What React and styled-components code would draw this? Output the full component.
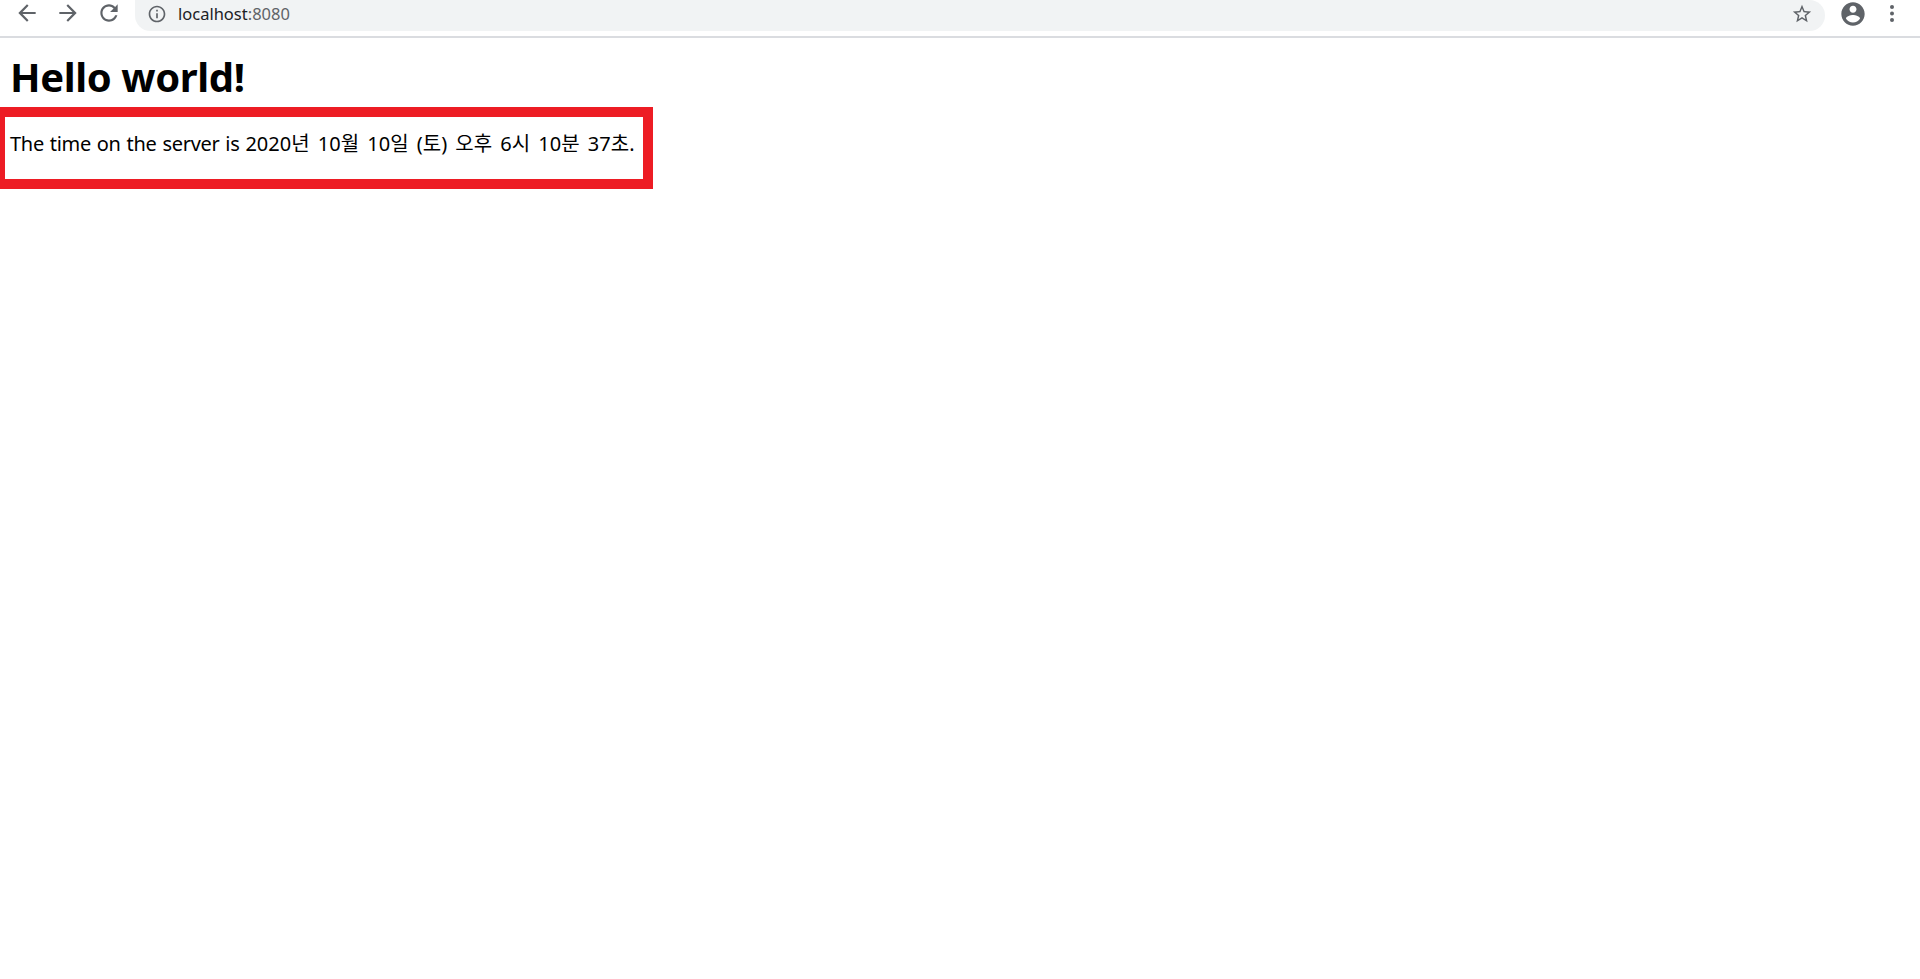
import React from "react";
import styled, { createGlobalStyle } from "styled-components";

const Global = createGlobalStyle`
  html, body { margin: 0; padding: 0; background: #fff; }
  body { font-family: "Noto Sans", "Noto Sans CJK KR", sans-serif; color: #000; }
`;
const Page = styled.div`
  min-height: 979px;
  display: flex;
  flex-direction: column;
  overflow: hidden;
`;
const Toolbar = styled.header`
  height: 36px;
  border-bottom: 2px solid #dadce0;
  display: flex;
  align-items: flex-start;
  color: #5f6368;
`;
const NavGroup = styled.nav`
  display: flex;
  gap: 15px;
  padding-left: 14px;
  width: 135px;
  box-sizing: border-box;
`;
const Icon = styled.svg`
  display: block;
  flex: none;
  fill: currentColor;
`;
const AddressBar = styled.div`
  width: 1690px;
  height: 31px;
  box-sizing: border-box;
  background: #f1f3f4;
  border-radius: 0 16px 16px 16px;
  display: flex;
  align-items: center;
  padding: 0 12px 3px;
  gap: 11px;
`;
const Url = styled.div`
  flex: 1;
  font-family: "Noto Sans", sans-serif;
  font-size: 16.5px;
  color: #5f6368;
  margin-top: -1px;
  b { font-weight: 400; color: #202124; }
`;
const Side = styled.div`
  display: flex;
  align-items: center;
  height: 27px;
  padding-left: 14px;
  gap: 23px;
`;
const Heading = styled.h1`
  margin: 0;
  padding: 16px 0 0 10px;
  height: 53px;
  font-size: 40px;
  line-height: 46px;
  font-weight: 700;
  letter-spacing: -0.4px;
`;
const TimeBox = styled.section`
  width: 653px;
  height: 82px;
  box-sizing: border-box;
  border: solid #ed1c24;
  border-width: 10px 10px 10px 5px;
  padding: 14px 0 0 5px;
`;
const TimeText = styled.p`
  margin: 0;
  font-size: 20px;
  line-height: 26px;
  white-space: nowrap;
`;
const Label = styled.span`
  letter-spacing: -0.3px;
  word-spacing: 1px;
`;
const Stamp = styled.span`
  word-spacing: 3px;
`;

const M = ({ size, d }) => (
  <Icon width={size} height={size} viewBox="0 0 24 24"><path d={d} /></Icon>
);

export default function App() {
  return (
    <Page>
      <Global />
      <Toolbar>
        <NavGroup>
          <M size={26} d="M20 11H7.83l5.59-5.59L12 4l-8 8 8 8 1.41-1.41L7.83 13H20v-2z" />
          <M size={26} d="M4 11h12.17l-5.59-5.59L12 4l8 8-8 8-1.41-1.41L16.17 13H4v-2z" />
          <M size={26} d="M17.65 6.35C16.2 4.9 14.21 4 12 4c-4.42 0-7.99 3.58-7.99 8s3.57 8 7.99 8c3.73 0 6.84-2.55 7.73-6h-2.08c-.82 2.33-3.04 4-5.65 4-3.31 0-6-2.69-6-6s2.69-6 6-6c1.66 0 3.14.69 4.22 1.78L13 11h7V4l-2.35 2.35z" />
        </NavGroup>
        <AddressBar>
          <M size={20} d="M11 7h2v2h-2zm0 4h2v6h-2zm1-9C6.48 2 2 6.48 2 12s4.48 10 10 10 10-4.48 10-10S17.52 2 12 2zm0 18c-4.41 0-8-3.59-8-8s3.59-8 8-8 8 3.59 8 8-3.59 8-8 8z" />
          <Url><b>localhost</b>:8080</Url>
          <M size={22} d="M22 9.24l-7.19-.62L12 2 9.19 8.63 2 9.24l5.46 4.73L5.82 21 12 17.27 18.18 21l-1.63-7.03L22 9.24zM12 15.4l-3.76 2.27 1-4.28-3.32-2.88 4.38-.38L12 6.1l1.71 4.04 4.38.38-3.32 2.88 1 4.28L12 15.4z" />
        </AddressBar>
        <Side>
          <M size={28} d="M12 2C6.48 2 2 6.48 2 12s4.48 10 10 10 10-4.48 10-10S17.52 2 12 2zm0 3c1.66 0 3 1.34 3 3s-1.34 3-3 3-3-1.34-3-3 1.34-3 3-3zm0 14.2c-2.5 0-4.71-1.28-6-3.22.03-1.99 4-3.08 6-3.08 1.99 0 5.97 1.09 6 3.08-1.29 1.94-3.5 3.22-6 3.22z" />
          <Icon width="4" height="17" viewBox="0 0 4 17">
            <circle cx="2" cy="2" r="2" />
            <circle cx="2" cy="8.5" r="2" />
            <circle cx="2" cy="15" r="2" />
          </Icon>
        </Side>
      </Toolbar>
      <main>
        <Heading>Hello world!</Heading>
        <TimeBox>
          <TimeText><Label>The time on the server is </Label><Stamp>2020년 10월 10일 (토) 오후 6시 10분 37초.</Stamp></TimeText>
        </TimeBox>
      </main>
    </Page>
  );
}
